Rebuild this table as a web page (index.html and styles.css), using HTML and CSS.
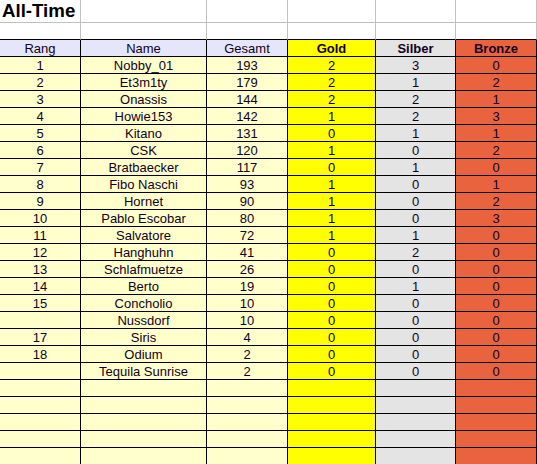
FILE: index.html
```html
<!DOCTYPE html>
<html lang="de">
<head>
<meta charset="utf-8">
<title>All-Time</title>
<link rel="stylesheet" href="styles.css">
</head>
<body>
<div class="sheet">
  <div class="c top title">All-Time</div><div class="c top"></div><div class="c top"></div><div class="c top"></div><div class="c top"></div><div class="c top"></div>
  <div class="c top2"></div><div class="c top2"></div><div class="c top2"></div><div class="c top2"></div><div class="c top2"></div><div class="c top2"></div>

  <div class="c hd">Rang</div><div class="c hd">Name</div><div class="c hd">Gesamt</div><div class="c gold b">Gold</div><div class="c silber b">Silber</div><div class="c bronze b">Bronze</div>

  <div class="c y">1</div><div class="c y">Nobby_01</div><div class="c y">193</div><div class="c gold">2</div><div class="c silber">3</div><div class="c bronze">0</div>
  <div class="c y">2</div><div class="c y">Et3m1ty</div><div class="c y">179</div><div class="c gold">2</div><div class="c silber">1</div><div class="c bronze">2</div>
  <div class="c y">3</div><div class="c y">Onassis</div><div class="c y">144</div><div class="c gold">2</div><div class="c silber">2</div><div class="c bronze">1</div>
  <div class="c y">4</div><div class="c y">Howie153</div><div class="c y">142</div><div class="c gold">1</div><div class="c silber">2</div><div class="c bronze">3</div>
  <div class="c y">5</div><div class="c y">Kitano</div><div class="c y">131</div><div class="c gold">0</div><div class="c silber">1</div><div class="c bronze">1</div>
  <div class="c y">6</div><div class="c y">CSK</div><div class="c y">120</div><div class="c gold">1</div><div class="c silber">0</div><div class="c bronze">2</div>
  <div class="c y">7</div><div class="c y">Bratbaecker</div><div class="c y">117</div><div class="c gold">0</div><div class="c silber">1</div><div class="c bronze">0</div>
  <div class="c y">8</div><div class="c y">Fibo Naschi</div><div class="c y">93</div><div class="c gold">1</div><div class="c silber">0</div><div class="c bronze">1</div>
  <div class="c y">9</div><div class="c y">Hornet</div><div class="c y">90</div><div class="c gold">1</div><div class="c silber">0</div><div class="c bronze">2</div>
  <div class="c y">10</div><div class="c y">Pablo Escobar</div><div class="c y">80</div><div class="c gold">1</div><div class="c silber">0</div><div class="c bronze">3</div>
  <div class="c y">11</div><div class="c y">Salvatore</div><div class="c y">72</div><div class="c gold">1</div><div class="c silber">1</div><div class="c bronze">0</div>
  <div class="c y">12</div><div class="c y">Hanghuhn</div><div class="c y">41</div><div class="c gold">0</div><div class="c silber">2</div><div class="c bronze">0</div>
  <div class="c y">13</div><div class="c y">Schlafmuetze</div><div class="c y">26</div><div class="c gold">0</div><div class="c silber">0</div><div class="c bronze">0</div>
  <div class="c y">14</div><div class="c y">Berto</div><div class="c y">19</div><div class="c gold">0</div><div class="c silber">1</div><div class="c bronze">0</div>
  <div class="c y">15</div><div class="c y">Concholio</div><div class="c y">10</div><div class="c gold">0</div><div class="c silber">0</div><div class="c bronze">0</div>
  <div class="c y"></div><div class="c y">Nussdorf</div><div class="c y">10</div><div class="c gold">0</div><div class="c silber">0</div><div class="c bronze">0</div>
  <div class="c y">17</div><div class="c y">Siris</div><div class="c y">4</div><div class="c gold">0</div><div class="c silber">0</div><div class="c bronze">0</div>
  <div class="c y">18</div><div class="c y">Odium</div><div class="c y">2</div><div class="c gold">0</div><div class="c silber">0</div><div class="c bronze">0</div>
  <div class="c y"></div><div class="c y">Tequila Sunrise</div><div class="c y">2</div><div class="c gold">0</div><div class="c silber">0</div><div class="c bronze">0</div>

  <div class="c y"></div><div class="c y"></div><div class="c y"></div><div class="c gold"></div><div class="c silber"></div><div class="c bronze"></div>
  <div class="c y"></div><div class="c y"></div><div class="c y"></div><div class="c gold"></div><div class="c silber"></div><div class="c bronze"></div>
  <div class="c y"></div><div class="c y"></div><div class="c y"></div><div class="c gold"></div><div class="c silber"></div><div class="c bronze"></div>
  <div class="c y"></div><div class="c y"></div><div class="c y"></div><div class="c gold"></div><div class="c silber"></div><div class="c bronze"></div>
  <div class="c y"></div><div class="c y"></div><div class="c y"></div><div class="c gold"></div><div class="c silber"></div><div class="c bronze"></div>
</div>
</body>
</html>
```

FILE: styles.css
```css
html, body {
  margin: 0;
  padding: 0;
  background: #ffffff;
}

body {
  width: 537px;
  height: 464px;
  overflow: hidden;
  font-family: "Liberation Sans", Arial, sans-serif;
  font-size: 13px;
  color: #110022;
}

.sheet {
  display: grid;
  grid-template-columns: 81px 126px 81px 88px 80px 81px;
  grid-template-rows: 23px;
  grid-auto-rows: 17px;
  width: 537px;
}

.c {
  box-sizing: border-box;
  border-right: 1px solid #000;
  border-bottom: 1px solid #000;
  text-align: center;
  line-height: 16px;
  padding-top: 1px;
  white-space: nowrap;
  overflow: hidden;
}

.top {
  border-right-color: #c0c0c0;
  border-bottom-color: #c0c0c0;
  padding: 0;
}

.top2 {
  border-right-color: #c0c0c0;
}

.title {
  overflow: visible;
  text-align: left;
  font-size: 18.67px;
  font-weight: bold;
  line-height: 22px;
  padding-left: 2px;
  color: #000;
}

.hd {
  background: #e6e6fa;
}

.y {
  background: #ffffcc;
}

.gold {
  background: #ffff00;
}

.silber {
  background: #e4e4e4;
}

.bronze {
  background: #e9633f;
}

.b {
  font-weight: bold;
}
```
